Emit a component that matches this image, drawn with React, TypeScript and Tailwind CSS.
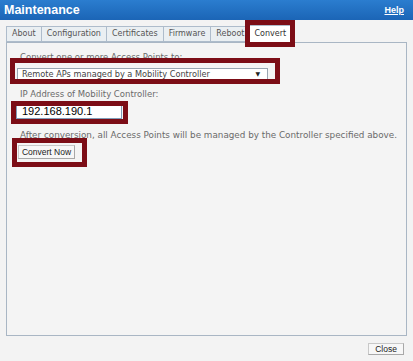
import React from "react";

const RED = "border-[#7c0d16]";

function Tab({ label }: { label: string }) {
  return (
    <div className="h-[16px] bg-[#eaeff2] border border-[#aebccb] border-l-0 first:border-l px-[5px] flex items-center text-[#555]">
      {label}
    </div>
  );
}

export default function App() {
  return (
    <div
      className="w-[413px] h-[361px] bg-[#f3f3f3] flex flex-col overflow-hidden"
      style={{ fontFamily: '"DejaVu Sans", Verdana, sans-serif' }}
    >
      <div className="h-[20px] shrink-0 bg-gradient-to-b from-[#2b7dcf] to-[#1b65b6] flex items-center justify-between pl-[4px] pr-[9px]">
        <span
          className="text-white font-bold text-[12.5px] leading-none"
          style={{ fontFamily: '"Liberation Sans", Arial, sans-serif' }}
        >
          Maintenance
        </span>
        <span
          className="text-white font-bold underline text-[9px] leading-none"
          style={{ fontFamily: '"Liberation Sans", Arial, sans-serif' }}
        >
          Help
        </span>
      </div>

      <div className="flex items-end pl-[6px] pt-[5px] text-[8px] leading-none">
        <Tab label="About" />
        <Tab label="Configuration" />
        <Tab label="Certificates" />
        <Tab label="Firmware" />
        <Tab label="Reboot" />
        <div className="relative h-[17px] bg-white border border-b-0 border-l-0 border-[#aebccb] px-[4px] flex items-center text-[#333]">
          Convert
          <div className={`absolute -left-[5px] -right-[5px] -top-[6px] -bottom-[5px] border-[5px] ${RED} z-10 pointer-events-none`} />
        </div>
      </div>

      <div className="mx-[6px] h-[294px] border border-[#a9b6c4] bg-[#f4f4f4] pl-[10px] pt-[10px] text-[8.5px] leading-none text-[#6a6a6a] shrink-0">
        <div className="pl-[3px] h-[10px]">Convert one or more Access Points to:</div>
        <div className="relative mt-[5px] w-[251px] h-[12px] bg-white border border-[#9aa6b2] flex items-center justify-between pl-[4px] pr-[7px] text-[#444] text-[8.2px]">
          <span>Remote APs managed by a Mobility Controller</span>
          <span className="text-[6px] text-[#222]">▼</span>
          <div className={`absolute -left-[8px] -right-[13px] -top-[11px] -bottom-[5px] border-[5px] ${RED} z-10 pointer-events-none`} />
        </div>
        <div className="pl-[3px] mt-[10px] h-[10px]">IP Address of Mobility Controller:</div>
        <div className="relative mt-[4px] -ml-[1px] w-[106px] h-[15px] bg-white border border-[#7f9db9] flex items-center pl-[5px]">
          <span
            className="text-[11px] text-black"
            style={{ fontFamily: '"Liberation Sans", Arial, sans-serif' }}
          >
            192.168.190.1
          </span>
          <div className={`absolute -left-[6px] -right-[7px] -top-[4px] -bottom-[6px] border-[5px] ${RED} z-10 pointer-events-none`} />
        </div>
        <div className="pl-[3px] mt-[12px] h-[10px] whitespace-nowrap text-[8.8px]">
          After conversion, all Access Points will be managed by the Controller specified above.
        </div>
        <div className="relative mt-[4px] ml-[1px] w-[57px] h-[14px] bg-[#f7f7f7] border border-[#c8c8c8] border-r-[#a8a8a8] border-b-[#a8a8a8] flex items-center justify-center">
          <span
            className="text-[8.5px] text-[#222]"
            style={{ fontFamily: '"Liberation Sans", Arial, sans-serif' }}
          >
            Convert Now
          </span>
          <div className={`absolute -left-[7px] -right-[13px] -top-[8px] -bottom-[9px] border-[5px] ${RED} z-10 pointer-events-none`} />
        </div>
      </div>

      <div className="flex justify-end pr-[9px] pt-[7px]">
        <div className="w-[36px] h-[12px] bg-[#f7f7f7] border border-[#c8c8c8] border-r-[#a8a8a8] border-b-[#a8a8a8] flex items-center justify-center">
          <span
            className="text-[8.5px] text-[#222] leading-none"
            style={{ fontFamily: '"Liberation Sans", Arial, sans-serif' }}
          >
            Close
          </span>
        </div>
      </div>
    </div>
  );
}
